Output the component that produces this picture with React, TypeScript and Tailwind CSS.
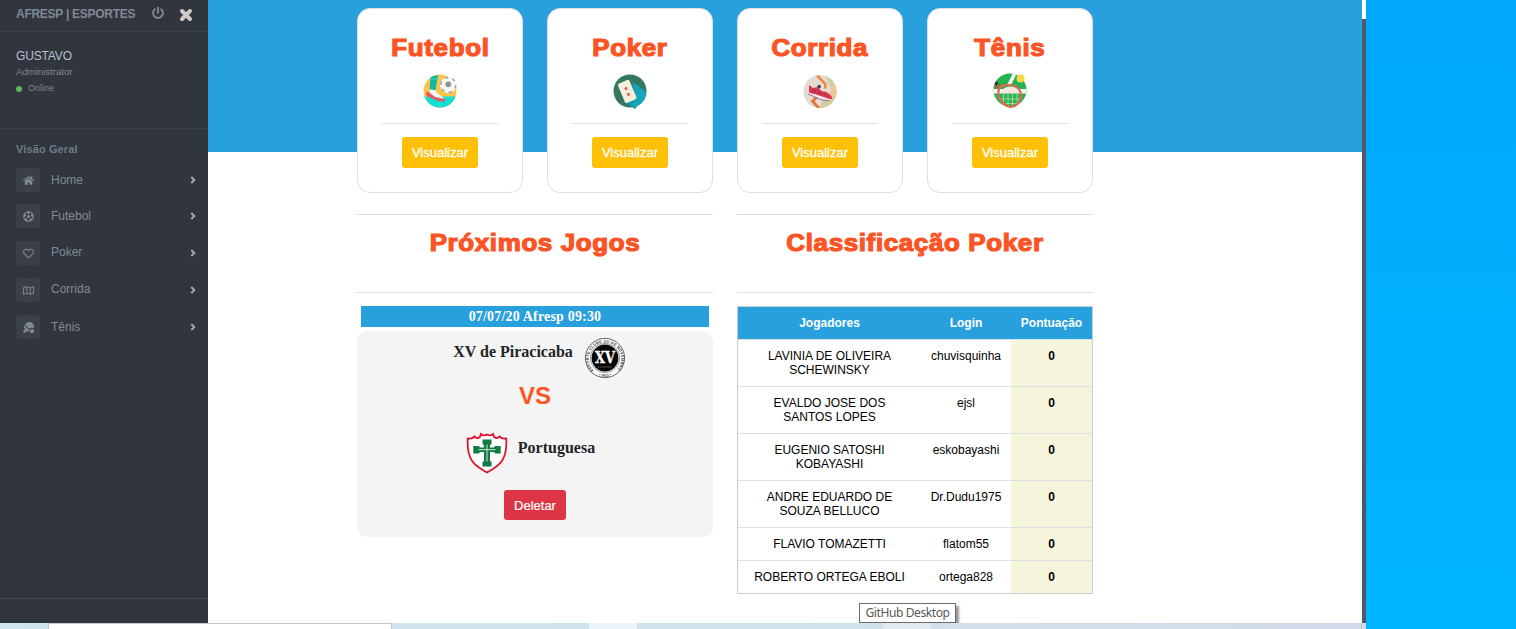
import type { ReactNode } from "react";
import {
  FaFutbol,
  FaHome,
  FaPowerOff,
  FaRegHeart,
  FaRegMap,
  FaTableTennis,
} from "react-icons/fa";

const menu = [
  { label: "Home", icon: <FaHome />, cls: "h-9", text: "" },
  { label: "Futebol", icon: <FaFutbol />, cls: "h-9", text: "" },
  { label: "Poker", icon: <FaRegHeart />, cls: "h-[38px]", text: "pb-0.5" },
  { label: "Corrida", icon: <FaRegMap />, cls: "h-9", text: "pb-0.5" },
  { label: "Tênis", icon: <FaTableTennis />, cls: "h-[38px]", text: "" },
];

const players = [
  { name: ["LAVINIA DE OLIVEIRA", "SCHEWINSKY"], login: "chuvisquinha" },
  { name: ["EVALDO JOSE DOS", "SANTOS LOPES"], login: "ejsl" },
  { name: ["EUGENIO SATOSHI", "KOBAYASHI"], login: "eskobayashi" },
  { name: ["ANDRE EDUARDO DE", "SOUZA BELLUCO"], login: "Dr.Dudu1975" },
  { name: ["FLAVIO TOMAZETTI"], login: "flatom55" },
  { name: ["ROBERTO ORTEGA EBOLI"], login: "ortega828" },
];

function SoccerArt() {
  return (
    <svg viewBox="0 0 34 34" className="h-[34px] w-[34px]">
      <defs>
        <clipPath id="soccer">
          <circle cx="17" cy="17" r="16.5" />
        </clipPath>
      </defs>
      <g clipPath="url(#soccer)">
        <rect width="34" height="34" fill="#fbc44e" />
        <rect y="22.5" width="34" height="12" fill="#0be0d3" />
        <path d="M7.500 1.500h7.500l-2.500 15-6-1z" fill="#12b9a0" />
        <path d="M7 5h8" stroke="#42d8bd" />
      </g>
      <path d="M6.500 15.500l5.500 .5 3 4 6 4-2 1.500-11-4z" fill="#f4f7f5" />
      <path d="M3 17.500l3 1 6 4.500 10 2-.5 3-8-1.500-10-4.500z" fill="#e6566b" />
      <circle cx="25.300" cy="11" r="8.300" fill="#fbf8f2" />
      <circle cx="25.300" cy="10.300" r="2.900" fill="#8d8e9b" />
      <circle
        cx="25.300"
        cy="11"
        r="7.500"
        fill="none"
        stroke="#a4a4ad"
        strokeWidth="1.500"
        strokeDasharray="3.600 4.250"
      />
    </svg>
  );
}

function CardsArt() {
  return (
    <svg viewBox="0 0 34 34" className="h-[34px] w-[34px] overflow-visible">
      <circle cx="17" cy="17" r="16.500" fill="#34795d" />
      <path d="M20 8l13.300 9.500c0 7-4 12-8.300 14l-3 3.500-4-2.500-7-5z" fill="#1794a7" />
      <path d="M21 9l12 9c-.5 7-4 11-8 13l-3 3-4-3 5-6z" fill="#15a4ba" />
      <g transform="rotate(-23 14 17.500)">
        <rect x="8" y="7" width="12.500" height="21" rx="2" fill="#f4efdc" />
        <path d="M14.200 12.300l1.800 2-1.800 2-1.800-2zM14.200 18.700l1.800 2-1.800 2-1.800-2z" fill="#e2594f" />
      </g>
    </svg>
  );
}

function ShoeArt() {
  return (
    <svg viewBox="0 0 34 34" className="h-[34px] w-[34px]">
      <defs>
        <clipPath id="shoe">
          <circle cx="17" cy="17.500" r="16.500" />
        </clipPath>
      </defs>
      <g clipPath="url(#shoe)">
        <rect width="34" height="35" fill="#e4dbd3" />
        <path d="M22 0l12 10v25H16l4-10 9-8z" fill="#d3cc9f" />
        <path d="M29 12l5-1v9l-7 3z" fill="#e9c894" />
        <path d="M14 1.500l8 8 .5 5" fill="none" stroke="#ee8a3b" strokeWidth="2.600" />
        <path d="M15 22l-5.500 5 7 8" fill="none" stroke="#e5713c" strokeWidth="2.800" />
      </g>
      <path d="M6 11l4 3 4.500-1 4 4 5 1 5 4 .5 3-3 1-20-6.500z" fill="#d8394d" />
      <path d="M5 18.500l8 2 15 5-2 1-7-.5-14-6z" fill="#f2edf0" />
      <path d="M5 20l14 6 7 .5" fill="none" stroke="#71435b" strokeWidth=".7" />
      <path d="M14 12l3-1.500 1 2.500-2 2z" fill="#313d60" />
      <path d="M9 16l4 2M15 18l3 2M20 19.500l2 2" stroke="#792d48" strokeWidth="1" />
    </svg>
  );
}

function TennisArt() {
  return (
    <svg viewBox="0 0 34 36" className="h-9 w-[34px]">
      <defs>
        <clipPath id="court">
          <circle cx="17" cy="17" r="16.500" />
        </clipPath>
        <clipPath id="strings">
          <ellipse cx="17.500" cy="24" rx="11" ry="10.500" />
        </clipPath>
      </defs>
      <g clipPath="url(#court)">
        <rect width="34" height="35" fill="#23b34e" />
        <path d="M0 16h34v4.500H0zM20 0h4l-6 12h-4z" fill="#f4fbf4" />
        <path d="M0 8l9 4-2 5-7-2z" fill="#7c7a47" />
        <path d="M1.500 9.500l3 1.500" stroke="#23382f" strokeWidth="3.500" />
      </g>
      <circle cx="27.500" cy="5.500" r="4" fill="#f9d949" />
      <g clipPath="url(#strings)">
        <rect x="5" y="12" width="26" height="9" fill="#f8e6e0" />
        <rect x="5" y="20.500" width="26" height="15" fill="#2bb355" />
        <path d="M10.500 20v16M15 20v16M19.500 20v16M24 20v16M5 26h26M5 30.500h26" stroke="#c6e6a8" strokeWidth=".7" />
      </g>
      <path
        d="M7 14c6-3 15-3 19 2 4 6 2 12-3 16-4 3-8 2-12-1-6-4-7-12-4-17z"
        fill="none"
        stroke="#df6a50"
        strokeWidth="2.200"
      />
    </svg>
  );
}

function XvCrest() {
  return (
    <svg viewBox="0 0 42 42" className="h-[42px] w-[42px]">
      <defs>
        <path id="ring" d="M9.500 33.500A16.300 16.300 0 1 1 32.500 33.500" />
        <path id="ringfoot" d="M11 36.800A18.500 18.500 0 0 0 31 36.800" />
      </defs>
      <circle cx="21" cy="21" r="19.600" fill="#fafafa" stroke="#555" strokeWidth=".9" />
      <circle cx="21" cy="21" r="14.600" fill="#fff" stroke="#555" strokeWidth=".6" />
      <circle cx="21" cy="21" r="13.400" fill="#070707" />
      <text className="font-['Liberation_Sans'] font-bold" fontSize="3.800" fill="#333">
        <textPath href="#ring" textLength="75">
          ESPORTE CLUBE XV DE NOVEMBRO
        </textPath>
      </text>
      <text className="font-['Liberation_Sans'] font-bold" fontSize="3.600" fill="#333" textAnchor="middle">
        <textPath href="#ringfoot" startOffset="50%">
          • 1913 •
        </textPath>
      </text>
      <text
        x="21"
        y="26"
        textAnchor="middle"
        textLength="20"
        lengthAdjust="spacingAndGlyphs"
        className="font-['DejaVu_Serif'] font-bold"
        fontSize="16"
        fill="#fff"
        stroke="#fff"
        strokeWidth=".3"
      >
        XV
      </text>
      <path d="M14 30h14" stroke="#777" strokeWidth="1.200" strokeDasharray="1 .7" />
    </svg>
  );
}

function PortuguesaCrest() {
  return (
    <svg viewBox="0 0 42 42" className="h-[42px] w-[42px]">
      <path
        d="M1.800 6.500c3 .5 5.500-.5 6.500-2 2.500 2.500 6 2 6.700-2.500 2 1.500 4 2 6 .5 2 1.500 4 1 6-.5.700 4.500 4.200 5 6.700 2.500 1 1.500 3.500 2.500 6.500 2 .5 8 .5 15-4 22-4 6-8.200 8-15.200 12-7-4-11.200-6-15.200-12-4.500-7-4.500-14-4-22z"
        fill="#fff"
        stroke="#e0142c"
        strokeWidth="1.800"
      />
      <path
        d="M16.500 7.500h9v4.500l-1.500 1v2.500h4l1.200-1.500h5.500v7.500h-5.500L28 20h-4v9l1.500 1v4.500h-9V30l1.500-1v-9h-4l-1.200 1.500H7.300V14h5.500l1.200 1.500h4V13l-1.500-1z"
        fill="#117b43"
      />
      <path d="M21 12.500v17M12.500 17.700h17" stroke="#cfe3d4" strokeWidth="1" />
    </svg>
  );
}

const sports = [
  { title: "Futebol", art: <SoccerArt /> },
  { title: "Poker", art: <CardsArt /> },
  { title: "Corrida", art: <ShoeArt /> },
  { title: "Tênis", art: <TennisArt /> },
];

function Heading({ children }: { children: string }) {
  return (
    <h2 className="origin-center scale-x-[1.08] whitespace-nowrap pb-px text-[24px] font-bold leading-[29px] tracking-[0.6px] text-[#fc5424] [-webkit-text-stroke:1.2px_#fc5424]">
      {children}
    </h2>
  );
}

function Sidebar() {
  return (
    <aside className="flex w-52 shrink-0 flex-col bg-[#31353d] text-[#818896]">
      <div className="flex h-8 items-start border-b border-[#3c4048] pl-4 pt-[7px]">
        <span className="w-[136px] whitespace-nowrap text-xs font-bold leading-[14px] tracking-[-0.27px]">
          AFRESP | ESPORTES
        </span>
        <FaPowerOff className="h-3 w-3" />
        <svg viewBox="0 0 14 14" className="ml-[15px] mt-px h-3.5 w-3.5">
          <path d="M3 3l8 8M11 3l-8 8" stroke="#cfcbc4" strokeWidth="4" strokeLinecap="round" />
        </svg>
      </div>
      <div className="flex h-[97px] flex-col border-b border-[#3c4048] pl-4 pt-[17px]">
        <span className="text-xs leading-[15px] tracking-[-0.15px] text-[#b8bfce]">GUSTAVO</span>
        <span className="mt-px text-[9.600px] leading-[13px]">Administrator</span>
        <span className="mt-1 flex items-center gap-1.5 text-[9px] leading-[13px]">
          <i className="h-1.5 w-1.5 rounded-full bg-[#5cb85c]" />
          Online
        </span>
      </div>
      <div className="flex-1 pt-3">
        <p className="pl-4 text-[11px] font-bold leading-4 tracking-[0.12px] text-[#6c7b88]">Visão Geral</p>
        <nav className="pt-[5px]">
          {menu.map((m) => (
            <div key={m.label} className={`flex items-center pl-4 pr-3 ${m.cls}`}>
              <span className="flex h-6 w-6 items-center justify-center rounded bg-[#3a3f48] text-[11px]">
                {m.icon}
              </span>
              <span className={`ml-[11px] flex-1 text-xs ${m.text}`}>{m.label}</span>
              <svg viewBox="0 0 6 8" className="h-2 w-1.5">
                <path d="M1.300 1l3 3-3 3" fill="none" stroke="#a4a9b4" strokeWidth="1.900" />
              </svg>
            </div>
          ))}
        </nav>
      </div>
      <div className="h-[25px] border-t border-[#464a52]" />
    </aside>
  );
}

function SportCard({ title, art }: { title: string; art: ReactNode }) {
  return (
    <div className="flex h-[185px] flex-col items-center rounded-[13px] border border-[#dfdfdf] bg-white pt-6">
      <Heading>{title}</Heading>
      <div className="mt-[10px] flex h-9 items-center">{art}</div>
      <hr className="mt-[14px] w-[116px] border-[#e1e1e1]" />
      <button className="mt-[13px] h-[31px] w-[76px] rounded-[3px] bg-[#ffc107] pt-px text-[13px] text-white [-webkit-text-stroke:0.3px_white]">
        Visualizar
      </button>
    </div>
  );
}

function SectionTitle({ children }: { children: string }) {
  return (
    <div className="h-[79px] border-y border-[#dfdfdf] pt-[13px] text-center">
      <Heading>{children}</Heading>
    </div>
  );
}

function NextGame() {
  return (
    <section className="w-[356px]">
      <SectionTitle>Próximos Jogos</SectionTitle>
      <div className="mx-1 mt-[13px] h-[21px] bg-[#28a0dd] text-center font-['Liberation_Serif',serif] text-[14px] font-bold leading-[21px] tracking-[0.18px] text-white">
        07/07/20 Afresp 09:30
      </div>
      <div className="mt-1 flex h-[206px] flex-col items-center rounded-[10px] bg-[#f4f4f4] font-['Liberation_Serif',serif] text-[16px] font-bold text-[#212529]">
        <div className="mt-[6px] flex h-[42px] items-start gap-[11px] pl-[9px]">
          <span className="mt-[5px] leading-5">XV de Piracicaba</span>
          <XvCrest />
        </div>
        <div className="mt-[3px] font-['Liberation_Sans',sans-serif] text-[24px] leading-7 text-[#fc5424]">VS</div>
        <div className="mr-[9px] mt-[22px] flex h-[42px] items-start gap-[10px]">
          <PortuguesaCrest />
          <span className="mt-[6px] leading-5">Portuguesa</span>
        </div>
        <button className="mt-4 h-[30px] w-[62px] rounded-[3px] bg-[#dc3545] pt-px font-['Liberation_Sans',sans-serif] text-[13px] font-normal text-white [-webkit-text-stroke:0.2px_white]">
          Deletar
        </button>
      </div>
    </section>
  );
}

function Ranking() {
  return (
    <section className="w-[356px]">
      <SectionTitle>Classificação Poker</SectionTitle>
      <div className="mt-[13px] border border-[#c9cdd2] text-center text-xs leading-[14px] text-black">
        <div className="grid h-8 grid-cols-[183px_90px_81px] items-center bg-[#28a0dd] font-bold text-white">
          <span>Jogadores</span>
          <span>Login</span>
          <span>Pontuação</span>
        </div>
        {players.map((p) => (
          <div key={p.login} className="grid grid-cols-[183px_90px_81px] border-t border-[#dee2e6]">
            <div className="py-[9px]">
              {p.name.map((n) => (
                <div key={n}>{n}</div>
              ))}
            </div>
            <div className="pt-[9px]">{p.login}</div>
            <div className="bg-[#f5f5dc] pt-[9px] font-bold">0</div>
          </div>
        ))}
      </div>
    </section>
  );
}

export default function App() {
  return (
    <div className="flex h-[629px] w-[1516px] overflow-hidden bg-[linear-gradient(#00a8fa,#00b6ff)] font-['Liberation_Sans',Arial,sans-serif]">
      <div className="flex w-[1366px] flex-col">
        <div className="flex h-[623px]">
          <Sidebar />
          <main className="relative flex w-[1154px] flex-col bg-[linear-gradient(#28a0dd_152px,#fff_152px)] pl-[149px] pt-2">
            <div className="grid w-[736px] grid-cols-4 gap-6">
              {sports.map((s) => (
                <SportCard key={s.title} {...s} />
              ))}
            </div>
            <div className="mt-[21px] flex w-[736px] gap-6">
              <NextGame />
              <Ranking />
            </div>
            <div className="absolute left-[651px] top-[603px] h-5 w-[97px] whitespace-nowrap border border-[#6b6b6b] bg-white text-center font-['Noto_Sans',sans-serif] text-[12px] leading-[18px] tracking-[-0.4px] text-[#575757] shadow-[3px_3px_2px_#999]">
              GitHub Desktop
            </div>
          </main>
          <div className="w-1 bg-[linear-gradient(#fff_19px,#50596a_19px)]" />
        </div>
        <div className="relative flex h-1.5 bg-[linear-gradient(90deg,#cfe6ee,#d0e3ec_50%,#d3dcea)]">
          <div className="ml-12 w-[344px] border border-b-0 border-[#c4c8cb] bg-white" />
          <div className="ml-[197px] w-12 bg-[#ebf4f8]" />
          <div className="ml-[246px] w-12 bg-[#e1e9f2]" />
          <div className="ml-auto mr-1 w-px bg-[#b8c0cb]" />
        </div>
      </div>
    </div>
  );
}
